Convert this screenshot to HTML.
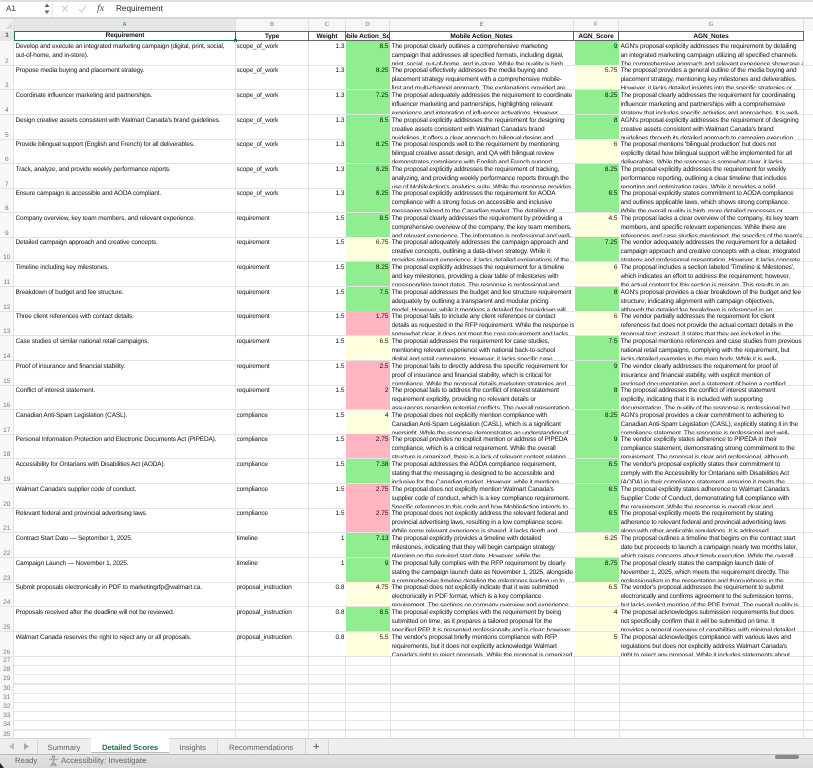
<!DOCTYPE html>
<html><head><meta charset="utf-8"><title>Detailed Scores</title>
<style>
html,body{margin:0;padding:0;background:#fff}
#p{position:relative;width:813px;height:768px;overflow:hidden;background:#fff;font-family:"Liberation Sans",sans-serif;color:#222;text-rendering:geometricPrecision;filter:blur(.25px)}
#p div,#p span{position:absolute}
.r{left:0;width:813px;height:25px;overflow:hidden;border-bottom:1px solid #e3e3e3;box-sizing:border-box;font-size:6.5px;line-height:9.2px;letter-spacing:-.15px;white-space:nowrap;color:#111}
.c{top:0;height:25px;box-sizing:border-box;padding-top:.7px;overflow:hidden}
.n{left:0;width:13.5px;text-align:center;color:#777;padding-top:16px;letter-spacing:0}
.a{left:15.5px;width:219px}
.b{left:236.5px;width:72px}
.w{left:309px;width:35.5px;text-align:right;letter-spacing:0}
.d{left:346px;width:44px;text-align:right;padding-right:1.5px;letter-spacing:0}
.e{left:391.5px;width:182px}
.f{left:574.5px;width:44.5px;text-align:right;padding-right:1.5px;letter-spacing:0}
.h{left:620.5px;width:182.5px}
.G{background:#90ee90}.Y{background:#ffffe0}.R{background:#ffb6c1}
.v{top:31px;width:1px;height:707px;background:#e4e4e4}
.l{left:14px;width:799px;height:1px;background:#e6e6e6}
.x{left:0;width:13.5px;text-align:center;color:#777;font-size:6.5px;line-height:8px}
.ch{top:19px;height:12px;background:#f6f6f6;border-right:1px solid #e0e0e0;box-sizing:border-box;text-align:center;font-size:6px;line-height:12px;color:#777}
.h1{top:31px;height:10px;box-sizing:border-box;border:1px solid #666;border-left:0;font-weight:bold;font-size:6.5px;line-height:9px;text-align:center;color:#111;overflow:hidden;white-space:nowrap;letter-spacing:-.1px;background:#fff}
.tb{font-size:7.7px;line-height:12px;color:#5f5f5f;top:742px;white-space:nowrap}
.sp{top:739px;width:1px;height:15px;background:#d4d4d4}
</style></head><body><div id="p">

<!-- formula bar -->
<div style="left:0;top:0;width:813px;height:2px;background:#e2dfd6"></div>
<div style="left:0;top:2px;width:813px;height:15px;background:#fff"></div>
<div style="left:0;top:17px;width:813px;height:2px;background:#d6d6d6"></div>
<div style="left:51px;top:2px;width:2px;height:15px;background:#efefef"></div>
<span style="left:6px;top:3px;font-size:8px;line-height:12px;color:#333">A1</span>
<svg style="position:absolute;left:44px;top:2px" width="6" height="13" viewBox="0 0 6 13"><path d="M3 1.5L5.5 5H.5z" fill="#666"/><path d="M3 12L5.5 8.5H.5z" fill="#666"/></svg>
<svg style="position:absolute;left:60px;top:4px" width="30" height="10" viewBox="0 0 30 10" fill="none" stroke="#cfcfcf" stroke-width="1.2"><path d="M2 1.5l6 6M8 1.5l-6 6"/><path d="M19 5l2.5 3 5-6.5"/></svg>
<span style="left:97px;top:3px;font-family:'Liberation Serif',serif;font-style:italic;font-size:10px;line-height:12px;color:#555">fx</span>
<span style="left:116px;top:3px;font-size:8.2px;line-height:12px;color:#222">Requirement</span>

<!-- column headers -->
<div style="left:0;top:19px;width:14px;height:12px;background:#f2f2f2;border-right:1px solid #ddd;box-sizing:border-box"></div>
<svg style="position:absolute;left:4px;top:21px" width="9" height="9"><path d="M8 1V8H1z" fill="#dcdcdc"/></svg>
<div class="ch" style="left:14px;width:222px;background:#e6e6e6;color:#217346">A</div>
<div class="ch" style="left:236px;width:73px">B</div>
<div class="ch" style="left:309px;width:37px">C</div>
<div class="ch" style="left:346px;width:44px">D</div>
<div class="ch" style="left:390px;width:184px">E</div>
<div class="ch" style="left:574px;width:45px">F</div>
<div class="ch" style="left:619px;width:185px">G</div>
<div class="ch" style="left:804px;width:9px;border-right:0"></div>

<!-- row header strip -->
<div style="left:0;top:31px;width:14px;height:707px;background:#f8f8f8;border-right:1px solid #e2e2e2;box-sizing:border-box"></div>

<!-- header row -->
<div style="left:0;top:31px;width:14px;height:10px;background:#e6e6e6;color:#217346;font-size:6.5px;line-height:10px;text-align:center;font-weight:bold">1</div>
<div class="h1" style="left:236px;width:73px">Type</div>
<div class="h1" style="left:309px;width:37px">Weight</div>
<div class="h1" style="left:346px;width:44px"><span style="left:-3px;top:0">obile Action_Score</span></div>
<div class="h1" style="left:390px;width:184px">Mobile Action_Notes</div>
<div class="h1" style="left:574px;width:45px">AGN_Score</div>
<div class="h1" style="left:619px;width:185px">AGN_Notes</div>
<div class="h1" style="left:14px;width:222px;border:1px solid #217346;line-height:8.5px">Requirement</div>
<div style="left:234px;top:39px;width:3px;height:3px;background:#217346"></div>

<div class="r" style="top:41px"><div class="c n">2</div><div class="c a">Develop and execute an integrated marketing campaign (digital, print, social,<br>out-of-home, and in-store).</div><div class="c b">scope_of_work</div><div class="c w">1.3</div><div class="c d G">8.5</div><div class="c e">The proposal clearly outlines a comprehensive marketing<br>campaign that addresses all specified formats, including digital,<br>print, social, out-of-home, and in-store. While the quality is high,</div><div class="c f G">9</div><div class="c h">AGN's proposal explicitly addresses the requirement by detailing<br>an integrated marketing campaign utilizing all specified channels.<br>The comprehensive approach and relevant experience showcase a</div></div>
<div class="r" style="top:65px"><div class="c n">3</div><div class="c a">Propose media buying and placement strategy.</div><div class="c b">scope_of_work</div><div class="c w">1.3</div><div class="c d G">8.25</div><div class="c e">The proposal effectively addresses the media buying and<br>placement strategy requirement with a comprehensive mobile-<br>first and multi-channel approach. The explanations provided are</div><div class="c f Y">5.75</div><div class="c h">The proposal provides a general outline of the media buying and<br>placement strategy, mentioning key milestones and deliverables.<br>However, it lacks detailed insights into the specific strategies or</div></div>
<div class="r" style="top:90px"><div class="c n">4</div><div class="c a">Coordinate influencer marketing and partnerships.</div><div class="c b">scope_of_work</div><div class="c w">1.3</div><div class="c d G">7.25</div><div class="c e">The proposal adequately addresses the requirement to coordinate<br>influencer marketing and partnerships, highlighting relevant<br>experience and integration of influencer activations. However,</div><div class="c f G">8.25</div><div class="c h">The proposal clearly addresses the requirement for coordinating<br>influencer marketing and partnerships with a comprehensive<br>strategy that includes specific activities and approaches. It is well-</div></div>
<div class="r" style="top:115px"><div class="c n">5</div><div class="c a">Design creative assets consistent with Walmart Canada's brand guidelines.</div><div class="c b">scope_of_work</div><div class="c w">1.3</div><div class="c d G">8.5</div><div class="c e">The proposal explicitly addresses the requirement for designing<br>creative assets consistent with Walmart Canada's brand<br>guidelines. It offers a clear approach to bilingual design and</div><div class="c f G">8</div><div class="c h">AGN's proposal explicitly addresses the requirement of designing<br>creative assets consistent with Walmart Canada's brand<br>guidelines through its detailed approach to campaign execution.</div></div>
<div class="r" style="top:139px"><div class="c n">6</div><div class="c a">Provide bilingual support (English and French) for all deliverables.</div><div class="c b">scope_of_work</div><div class="c w">1.3</div><div class="c d G">8.25</div><div class="c e">The proposal responds well to the requirement by mentioning<br>bilingual creative asset design, and QA with bilingual review<br>demonstrates compliance with English and French support.</div><div class="c f Y">6</div><div class="c h">The proposal mentions 'bilingual production' but does not<br>explicitly detail how bilingual support will be implemented for all<br>deliverables. While the response is somewhat clear, it lacks</div></div>
<div class="r" style="top:164px"><div class="c n">7</div><div class="c a">Track, analyze, and provide weekly performance reports.</div><div class="c b">scope_of_work</div><div class="c w">1.3</div><div class="c d G">8.25</div><div class="c e">The proposal explicitly addresses the requirement of tracking,<br>analyzing, and providing weekly performance reports through the<br>use of MobileAction's analytics suite. While the response provides</div><div class="c f G">8.25</div><div class="c h">The proposal explicitly addresses the requirement for weekly<br>performance reporting, outlining a clear timeline that includes<br>reporting and optimization tasks. While it provides a solid</div></div>
<div class="r" style="top:188px"><div class="c n">8</div><div class="c a">Ensure campaign is accessible and AODA compliant.</div><div class="c b">scope_of_work</div><div class="c w">1.3</div><div class="c d G">8.25</div><div class="c e">The proposal explicitly addresses the requirement for AODA<br>compliance with a strong focus on accessible and inclusive<br>messaging tailored to the Canadian market. The detailing of</div><div class="c f G">8.5</div><div class="c h">The proposal explicitly states commitment to AODA compliance<br>and outlines applicable laws, which shows strong compliance.<br>While the overall quality is high, more detailed processes or</div></div>
<div class="r" style="top:213px"><div class="c n">9</div><div class="c a">Company overview, key team members, and relevant experience.</div><div class="c b">requirement</div><div class="c w">1.5</div><div class="c d G">8.5</div><div class="c e">The proposal clearly addresses the requirement by providing a<br>comprehensive overview of the company, the key team members,<br>and relevant experience. The information is professional and well-</div><div class="c f Y">4.5</div><div class="c h">The proposal lacks a clear overview of the company, its key team<br>members, and specific relevant experiences. While there are<br>references and case studies mentioned, the specifics of the team's</div></div>
<div class="r" style="top:237px"><div class="c n">10</div><div class="c a">Detailed campaign approach and creative concepts.</div><div class="c b">requirement</div><div class="c w">1.5</div><div class="c d Y">6.75</div><div class="c e">The proposal adequately addresses the campaign approach and<br>creative concepts, outlining a data-driven strategy. While it<br>provides relevant experience, it lacks detailed explanations of the</div><div class="c f G">7.25</div><div class="c h">The vendor adequately addresses the requirement for a detailed<br>campaign approach and creative concepts with a clear, integrated<br>strategy and professional presentation. However, it lacks concrete</div></div>
<div class="r" style="top:262px"><div class="c n">11</div><div class="c a">Timeline including key milestones.</div><div class="c b">requirement</div><div class="c w">1.5</div><div class="c d G">8.25</div><div class="c e">The proposal explicitly addresses the requirement for a timeline<br>and key milestones, providing a clear table of milestones with<br>corresponding target dates. The response is professional and</div><div class="c f Y">6</div><div class="c h">The proposal includes a section labeled 'Timeline &amp; Milestones',<br>which indicates an effort to address the requirement; however,<br>the actual content for this section is missing. This results in an</div></div>
<div class="r" style="top:287px"><div class="c n">12</div><div class="c a">Breakdown of budget and fee structure.</div><div class="c b">requirement</div><div class="c w">1.5</div><div class="c d G">7.5</div><div class="c e">The proposal addresses the budget and fee structure requirement<br>adequately by outlining a transparent and modular pricing<br>model. However, while it mentions a detailed fee breakdown will</div><div class="c f G">8</div><div class="c h">AGN's proposal provides a clear breakdown of the budget and fee<br>structure, indicating alignment with campaign objectives,<br>although the detailed fee breakdown is referenced in an</div></div>
<div class="r" style="top:311px"><div class="c n">13</div><div class="c a">Three client references with contact details.</div><div class="c b">requirement</div><div class="c w">1.5</div><div class="c d R">1.75</div><div class="c e">The proposal fails to include any client references or contact<br>details as requested in the RFP requirement. While the response is<br>somewhat clear, it does not meet the core requirement and lacks</div><div class="c f Y">6</div><div class="c h">The vendor partially addresses the requirement for client<br>references but does not provide the actual contact details in the<br>proposal text; instead, it states that they are included in the</div></div>
<div class="r" style="top:336px"><div class="c n">14</div><div class="c a">Case studies of similar national retail campaigns.</div><div class="c b">requirement</div><div class="c w">1.5</div><div class="c d Y">6.5</div><div class="c e">The proposal addresses the requirement for case studies,<br>mentioning relevant experience with national back-to-school<br>digital and retail campaigns. However, it lacks specific case</div><div class="c f G">7.5</div><div class="c h">The proposal mentions references and case studies from previous<br>national retail campaigns, complying with the requirement, but<br>lacks detailed examples in the main body. While it is well-</div></div>
<div class="r" style="top:361px"><div class="c n">15</div><div class="c a">Proof of insurance and financial stability.</div><div class="c b">requirement</div><div class="c w">1.5</div><div class="c d R">2.5</div><div class="c e">The proposal fails to directly address the specific requirement for<br>proof of insurance and financial stability, which is critical for<br>compliance. While the proposal details marketing strategies and</div><div class="c f G">9</div><div class="c h">The vendor clearly addresses the requirement for proof of<br>insurance and financial stability, with explicit mention of<br>enclosed documentation and a statement of being a certified</div></div>
<div class="r" style="top:385px"><div class="c n">16</div><div class="c a">Conflict of interest statement.</div><div class="c b">requirement</div><div class="c w">1.5</div><div class="c d R">2</div><div class="c e">The proposal fails to address the conflict of interest statement<br>requirement explicitly, providing no relevant details or<br>assurances regarding potential conflicts. The overall presentation</div><div class="c f G">8</div><div class="c h">The proposal addresses the conflict of interest statement<br>explicitly, indicating that it is included with supporting<br>documentation. The quality of the response is professional but</div></div>
<div class="r" style="top:410px"><div class="c n">17</div><div class="c a">Canadian Anti-Spam Legislation (CASL).</div><div class="c b">compliance</div><div class="c w">1.5</div><div class="c d Y">4</div><div class="c e">The proposal does not explicitly mention compliance with<br>Canadian Anti-Spam Legislation (CASL), which is a significant<br>oversight. While the response demonstrates an understanding of</div><div class="c f G">8.25</div><div class="c h">AGN's proposal provides a clear commitment to adhering to<br>Canadian Anti-Spam Legislation (CASL), explicitly stating it in the<br>compliance statement. The response is professional and well-</div></div>
<div class="r" style="top:434px"><div class="c n">18</div><div class="c a">Personal Information Protection and Electronic Documents Act (PIPEDA).</div><div class="c b">compliance</div><div class="c w">1.5</div><div class="c d R">2.75</div><div class="c e">The proposal provides no explicit mention or address of PIPEDA<br>compliance, which is a critical requirement. While the overall<br>structure is organized, there is a lack of relevant content relating</div><div class="c f G">9</div><div class="c h">The vendor explicitly states adherence to PIPEDA in their<br>compliance statement, demonstrating strong commitment to the<br>requirement. The proposal is clear and professional, although</div></div>
<div class="r" style="top:459px"><div class="c n">19</div><div class="c a">Accessibility for Ontarians with Disabilities Act (AODA).</div><div class="c b">compliance</div><div class="c w">1.5</div><div class="c d G">7.38</div><div class="c e">The proposal addresses the AODA compliance requirement,<br>stating that the messaging is designed to be accessible and<br>inclusive for the Canadian market. However, while it mentions</div><div class="c f G">8.5</div><div class="c h">The vendor's proposal explicitly states their commitment to<br>comply with the Accessibility for Ontarians with Disabilities Act<br>(AODA) in their compliance statement, ensuring it meets the</div></div>
<div class="r" style="top:484px"><div class="c n">20</div><div class="c a">Walmart Canada's supplier code of conduct.</div><div class="c b">compliance</div><div class="c w">1.5</div><div class="c d R">2.75</div><div class="c e">The proposal does not explicitly mention Walmart Canada's<br>supplier code of conduct, which is a key compliance requirement.<br>Specific references to this code and how MobileAction intends to</div><div class="c f G">8.5</div><div class="c h">The proposal explicitly states adherence to Walmart Canada's<br>Supplier Code of Conduct, demonstrating full compliance with<br>the requirement. While the response is overall clear and</div></div>
<div class="r" style="top:508px"><div class="c n">21</div><div class="c a">Relevant federal and provincial advertising laws.</div><div class="c b">compliance</div><div class="c w">1.5</div><div class="c d R">2.75</div><div class="c e">The proposal does not explicitly address the relevant federal and<br>provincial advertising laws, resulting in a low compliance score.<br>While some relevant experience is shared, it lacks depth and</div><div class="c f G">8.5</div><div class="c h">The proposal explicitly meets the requirement by stating<br>adherence to relevant federal and provincial advertising laws<br>along with other applicable regulations. It is addressed</div></div>
<div class="r" style="top:533px"><div class="c n">22</div><div class="c a">Contract Start Date — September 1, 2025.</div><div class="c b">timeline</div><div class="c w">1</div><div class="c d G">7.13</div><div class="c e">The proposal explicitly provides a timeline with detailed<br>milestones, indicating that they will begin campaign strategy<br>planning on the required start date. However, while the</div><div class="c f Y">6.25</div><div class="c h">The proposal outlines a timeline that begins on the contract start<br>date but proceeds to launch a campaign nearly two months later,<br>which raises concerns about timely execution. While the overall</div></div>
<div class="r" style="top:558px"><div class="c n">23</div><div class="c a">Campaign Launch — November 1, 2025.</div><div class="c b">timeline</div><div class="c w">1</div><div class="c d G">9</div><div class="c e">The proposal fully complies with the RFP requirement by clearly<br>stating the campaign launch date as November 1, 2025, alongside<br>a comprehensive timeline detailing the milestones leading up to</div><div class="c f G">8.75</div><div class="c h">The proposal clearly states the campaign launch date of<br>November 1, 2025, which meets the requirement directly. The<br>professionalism in the presentation and thoroughness in the</div></div>
<div class="r" style="top:582px"><div class="c n">24</div><div class="c a">Submit proposals electronically in PDF to marketingrfp@walmart.ca.</div><div class="c b">proposal_instruction</div><div class="c w">0.8</div><div class="c d Y">4.75</div><div class="c e">The proposal does not explicitly indicate that it was submitted<br>electronically in PDF format, which is a key compliance<br>requirement. The sections on company overview and experience</div><div class="c f Y">6.5</div><div class="c h">The vendor's proposal addresses the requirement to submit<br>electronically and confirms agreement to the submission terms,<br>but lacks explicit mention of the PDF format. The overall quality is</div></div>
<div class="r" style="top:607px"><div class="c n">25</div><div class="c a">Proposals received after the deadline will not be reviewed.</div><div class="c b">proposal_instruction</div><div class="c w">0.8</div><div class="c d G">8.5</div><div class="c e">The proposal explicitly complies with the requirement by being<br>submitted on time, as it prepares a tailored proposal for the<br>specified RFP. It is presented professionally and is clear; however,</div><div class="c f Y">4</div><div class="c h">The proposal acknowledges submission requirements but does<br>not specifically confirm that it will be submitted on time. It<br>provides a general overview of capabilities with minimal detailed</div></div>
<div class="r" style="top:632px"><div class="c n">26</div><div class="c a">Walmart Canada reserves the right to reject any or all proposals.</div><div class="c b">proposal_instruction</div><div class="c w">0.8</div><div class="c d Y">5.5</div><div class="c e">The vendor's proposal briefly mentions compliance with RFP<br>requirements, but it does not explicitly acknowledge Walmart<br>Canada's right to reject proposals. While the proposal is organized</div><div class="c f Y">5</div><div class="c h">The proposal acknowledges compliance with various laws and<br>regulations but does not explicitly address Walmart Canada's<br>right to reject any proposal. While it includes statements about</div></div>

<!-- vertical gridlines -->
<div class="v" style="left:235px;top:41px;height:697px"></div>
<div class="v" style="left:308px;top:41px;height:697px"></div>
<div class="v" style="left:345px;top:656px;height:82px"></div>
<div class="v" style="left:390px;top:656px;height:82px"></div>
<div class="v" style="left:574px;top:656px;height:82px"></div>
<div class="v" style="left:619px;top:656px;height:82px"></div>
<div class="v" style="left:803px;top:41px;height:697px"></div>

<!-- empty rows -->
<div class="l" style="top:665px"></div><div class="l" style="top:674px"></div><div class="l" style="top:683px;height:2px"></div><div class="l" style="top:693px"></div><div class="l" style="top:702px"></div><div class="l" style="top:711px"></div><div class="l" style="top:720px"></div><div class="l" style="top:729px;height:2px"></div>
<div class="x" style="top:657px">27</div><div class="x" style="top:666px">28</div><div class="x" style="top:675px">29</div><div class="x" style="top:685px">30</div><div class="x" style="top:694px">31</div><div class="x" style="top:703px">32</div><div class="x" style="top:712px">33</div><div class="x" style="top:721px">34</div><div class="x" style="top:731px">35</div>

<!-- tab bar -->
<div style="left:0;top:738px;width:813px;height:16px;background:#eee;border-top:1px solid #d6d6d6;box-sizing:border-box"></div>
<svg style="position:absolute;left:8px;top:742px" width="22" height="9"><path d="M6 1v7L1 4.5z" fill="#bbb"/><path d="M16 1v7l5-3.5z" fill="#aaa"/></svg>
<div class="sp" style="left:37px"></div>
<span class="tb" style="left:47.5px">Summary</span>
<div style="left:91px;top:738px;width:78px;height:15px;background:#fff;border-bottom:1px solid #bbb;box-sizing:border-box"></div>
<span class="tb" style="left:102px;color:#217346;font-weight:bold;letter-spacing:-.1px">Detailed Scores</span>
<span class="tb" style="left:179.5px">Insights</span>
<div class="sp" style="left:217px"></div>
<span class="tb" style="left:229px">Recommendations</span>
<div class="sp" style="left:305px"></div>
<span class="tb" style="left:313px;font-size:11px;color:#444;top:741px">+</span>
<div class="sp" style="left:328px"></div>

<!-- status bar -->
<div style="left:0;top:754px;width:813px;height:14px;background:linear-gradient(#e2e2e2,#d8d8d8);border-top:1px solid #b8b8b8;box-sizing:border-box"></div>
<span class="tb" style="left:15px;top:755px;color:#666">Ready</span>
<svg style="position:absolute;left:48px;top:755px" width="11" height="12" viewBox="0 0 11 12" fill="none" stroke="#888" stroke-width=".8"><circle cx="5.5" cy="2" r="1.2"/><path d="M1 4l4.5 1L10 4M5.5 5v2.5M5.5 7.5L2.5 11M5.5 7.5L8.5 11M3 9l5 2M8 9l-5 2"/></svg>
<span class="tb" style="left:61px;top:755px;color:#666;font-size:7.9px">Accessibility: Investigate</span>
<div style="left:775px;top:755px;width:24px;height:4px;border-radius:2px;background:#8a8a8a"></div>
<svg style="position:absolute;left:0;top:763px" width="5" height="5"><path d="M0 0L4 5H0z" fill="#222"/></svg>
</div></body></html>
